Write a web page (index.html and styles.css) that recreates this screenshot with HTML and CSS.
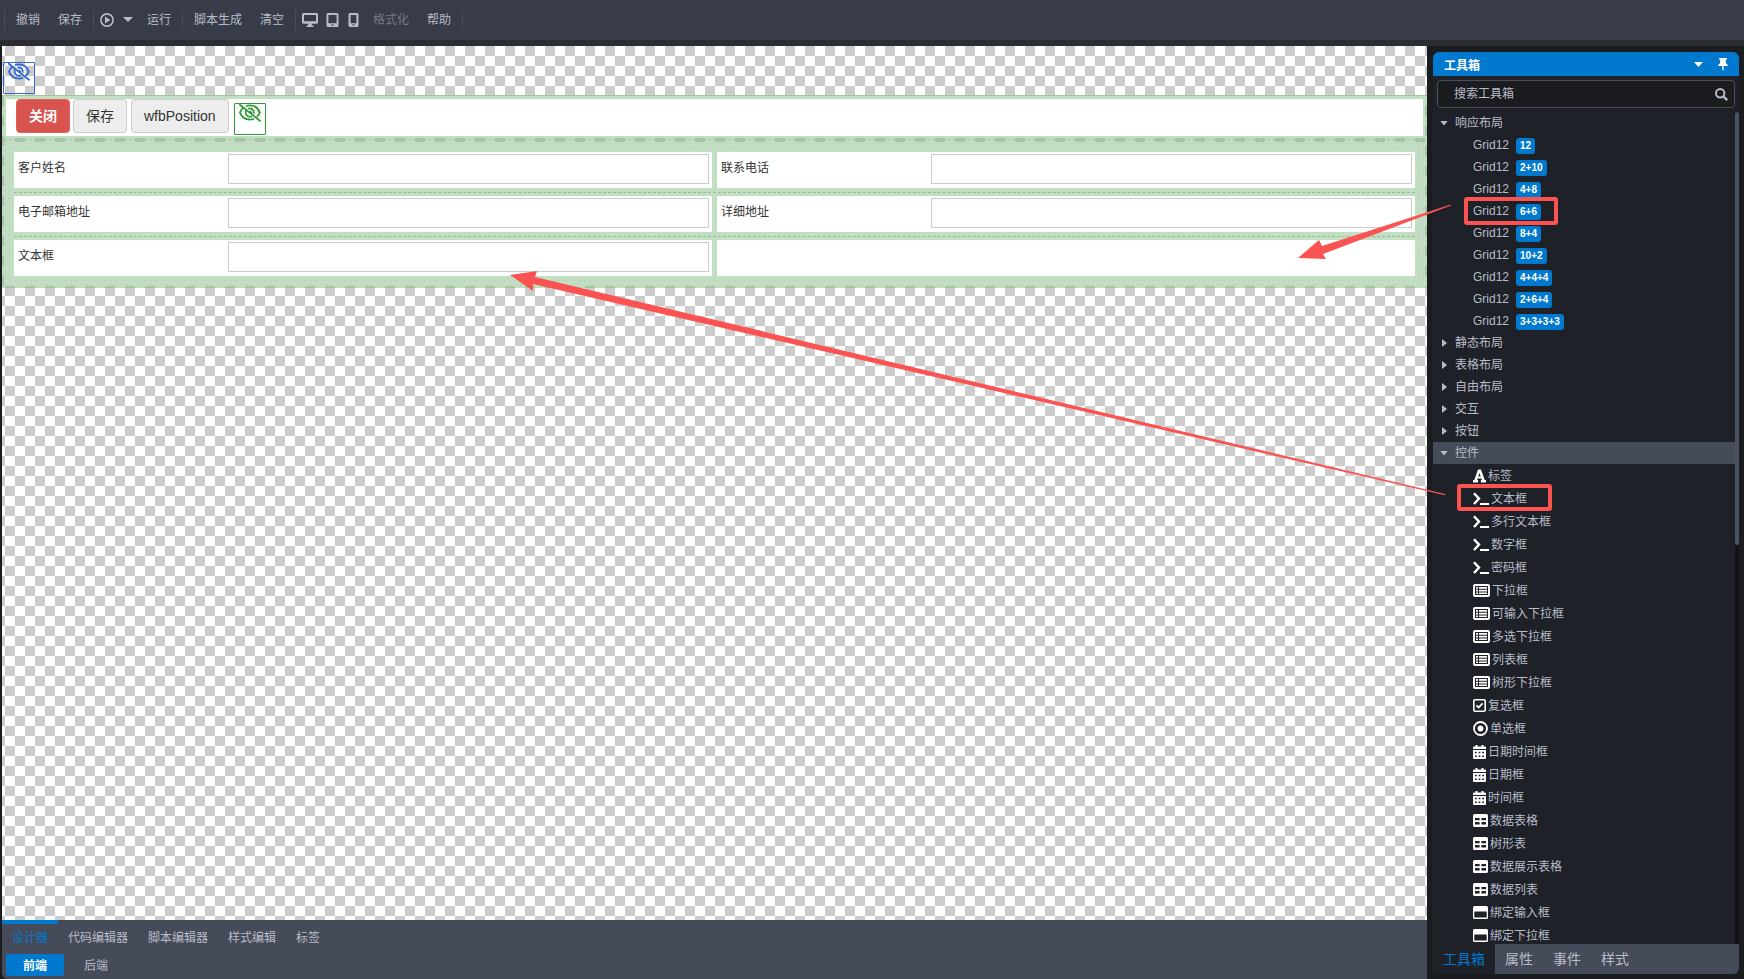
FILE: index.html
```html
<!DOCTYPE html>
<html lang="zh-CN">
<head>
<meta charset="utf-8">
<title>设计器</title>
<link rel="stylesheet" href="styles.css">
</head>
<body>
<svg class="defs" width="0" height="0" aria-hidden="true">
  <symbol id="font" viewBox="0 0 13 14"><path fill-rule="evenodd" d="M5 .5h3l3.700 10.500H13v2.500H7.900V11h1l-.4-1.400h-4L4.100 11h1v2.500H0V11h1.300zM6.500 4 5.300 7.500h2.400z"/></symbol>
  <symbol id="term" viewBox="0 0 16 14"><path d="M1 1.200 6 6.600 1 12" fill="none" stroke="currentColor" stroke-width="2.400"/><path d="M7 11h9v2H7z"/></symbol>
  <symbol id="list" viewBox="0 0 17 13"><path fill-rule="evenodd" d="M2 0h13a2 2 0 0 1 2 2v9a2 2 0 0 1-2 2H2a2 2 0 0 1-2-2V2a2 2 0 0 1 2-2zM2 2v9h13V2zM3 3h2v1.700H3zM6 3h8v1.700H6zM3 5.700h2v1.700H3zM6 5.700h8v1.700H6zM3 8.400h2v1.700H3zM6 8.400h8v1.700H6z"/></symbol>
  <symbol id="check" viewBox="0 0 13 13"><rect x=".8" y=".8" width="11.400" height="11.400" rx="1.200" fill="none" stroke="currentColor" stroke-width="1.600"/><path d="m3.400 6.300 2.200 2.200 4-4.200" fill="none" stroke="currentColor" stroke-width="1.800"/></symbol>
  <symbol id="radio" viewBox="0 0 15 15"><circle cx="7.500" cy="7.500" r="6.500" fill="none" stroke="currentColor" stroke-width="1.800"/><circle cx="7.500" cy="7.500" r="2.900"/></symbol>
  <symbol id="cal" viewBox="0 0 13 14"><path fill-rule="evenodd" d="M2.500 0h2v1.600h4V0h2v1.600H12a1 1 0 0 1 1 1V4H0V2.600a1 1 0 0 1 1-1h1.500zM0 5h13v8a1 1 0 0 1-1 1H1a1 1 0 0 1-1-1zM2 6.800v1.500h1.800V6.800zM5.600 6.800v1.500h1.800V6.800zM9.200 6.800v1.500H11V6.800zM2 10.400v1.500h1.800v-1.500zM5.600 10.400v1.500h1.800v-1.500zM9.200 10.400v1.500H11v-1.500z"/></symbol>
  <symbol id="table" viewBox="0 0 15 13"><path fill-rule="evenodd" d="M1.500 0h12A1.500 1.500 0 0 1 15 1.500v10a1.500 1.500 0 0 1-1.500 1.500h-12A1.500 1.500 0 0 1 0 11.500v-10A1.500 1.500 0 0 1 1.500 0zM2 4v2.200h4.600V4zM8.400 4v2.200H13V4zM2 8v2.500h4.600V8zM8.400 8v2.500H13V8z"/></symbol>
  <symbol id="window" viewBox="0 0 15 13"><path fill-rule="evenodd" d="M1.500 0h12A1.500 1.500 0 0 1 15 1.500v10a1.500 1.500 0 0 1-1.500 1.500h-12A1.500 1.500 0 0 1 0 11.500v-10A1.500 1.500 0 0 1 1.500 0zM1.300 5.500v6h12.400v-6z"/></symbol>
  <symbol id="eye" viewBox="0 0 22 18"><g fill="none" stroke="currentColor" stroke-width="1.800"><path d="M4.500 3.300C2.600 5 1.500 6.800 1 8.600c1.600 4.200 5.400 7 10 7 1.500 0 2.800-.2 4-.7M7 2.200C8.200 1.600 9.500 1.300 11 1.300c4.600 0 8.200 3 9.800 7.300-.6 1.500-1.600 3-2.900 4.200"/><path d="M7.200 6.200c-1.600 3 .2 6.600 3.800 6.600 1 0 1.500-.2 2-.5M9.300 4.700c3.600-1 6.300 1.900 5.400 5.100"/><path d="M10.600 7.600c1.300 0 1.900.8 1.900 1.600"/><path d="m0 0 21.500 17.300"/></g></symbol>
</svg>

<header class="toolbar">
  <div class="group"><button class="tool">撤销</button><button class="tool">保存</button></div>
  <div class="group">
    <button class="tool icon" aria-label="预览"><svg width="14" height="14" viewBox="0 0 14 14"><circle cx="7" cy="7" r="6.100" fill="none" stroke="currentColor" stroke-width="1.600"/><path d="m5 3.600 5.400 3.400L5 10.400z"/></svg></button>
    <button class="tool icon wide" aria-label="更多"><svg width="10" height="5" viewBox="0 0 10 5"><path d="M0 0h10L5 5z"/></svg></button>
    <button class="tool">运行</button>
  </div>
  <div class="group"><button class="tool">脚本生成</button><button class="tool">清空</button></div>
  <div class="group">
    <button class="tool icon" aria-label="桌面"><svg width="16" height="14" viewBox="0 0 16 14"><path fill-rule="evenodd" d="M1.500 0h13A1.500 1.500 0 0 1 16 1.500v7.800a1.500 1.500 0 0 1-1.500 1.500H9.600l.5 1.700h1.400V14h-7v-1.500h1.400l.5-1.700H1.500A1.500 1.500 0 0 1 0 9.300V1.500A1.500 1.500 0 0 1 1.500 0zM2 2v6.200h12V2z"/></svg></button>
    <button class="tool icon" aria-label="平板"><svg width="13" height="14" viewBox="0 0 13 14"><path fill-rule="evenodd" d="M2 0h9a1.500 1.500 0 0 1 1.500 1.500v11A1.500 1.500 0 0 1 11 14H2a1.500 1.500 0 0 1-1.500-1.500v-11A1.500 1.500 0 0 1 2 0zM2.400 1.900v8.400h8.200V1.900zM5.700 11.300v1.500h1.600v-1.500z"/></svg></button>
    <button class="tool icon wide" aria-label="手机"><svg width="11" height="14" viewBox="0 0 11 14"><path fill-rule="evenodd" d="M2 0h7a1.500 1.500 0 0 1 1.500 1.500v11A1.500 1.500 0 0 1 9 14H2a1.500 1.500 0 0 1-1.500-1.500v-11A1.500 1.500 0 0 1 2 0zM2.600 1.900v8.400h5.800V1.900zM4.700 11.300v1.500h1.600v-1.500z"/></svg></button>
    <button class="tool" disabled>格式化</button><button class="tool">帮助</button>
  </div>
</header>

<div class="workspace">
  <main class="editor">
    <div class="canvas">
      <div class="canvas-top"><span class="hidden-item blue"><svg width="22" height="18"><use href="#eye"/></svg></span></div>
      <form class="form">
        <div class="form-bar">
          <div class="form-buttons">
            <button type="button" class="btn danger">关闭</button><button type="button" class="btn">保存</button><button type="button" class="btn">wfbPosition</button><span class="hidden-item green"><svg width="22" height="18"><use href="#eye"/></svg></span>
          </div>
        </div>
        <div class="seam"></div>
        <div class="form-grid"><div class="grid-outer"><div class="grid-inner">
          <div class="row">
            <div class="cell"><label for="f1">客户姓名</label><input id="f1" type="text"></div>
            <div class="cell"><label for="f2">联系电话</label><input id="f2" type="text"></div>
          </div>
          <div class="row">
            <div class="cell"><label for="f3">电子邮箱地址</label><input id="f3" type="text"></div>
            <div class="cell"><label for="f4">详细地址</label><input id="f4" type="text"></div>
          </div>
          <div class="row">
            <div class="cell"><label for="f5">文本框</label><input id="f5" type="text"></div>
            <div class="cell"></div>
          </div>
        </div></div></div>
      </form>
    </div>
    <footer class="editor-foot">
      <nav class="tabs"><button class="tab active">设计器</button><button class="tab">代码编辑器</button><button class="tab">脚本编辑器</button><button class="tab">样式编辑</button><button class="tab">标签</button></nav>
      <nav class="sides"><button class="side active">前端</button><button class="side">后端</button></nav>
    </footer>
  </main>

  <aside class="panel">
    <div class="panel-head"><span>工具箱</span>
      <button class="head-btn" aria-label="菜单"><svg width="9" height="5" viewBox="0 0 9 5"><path d="M0 0h9L4.500 5z"/></svg></button>
      <button class="head-btn" aria-label="固定"><svg width="10" height="13" viewBox="0 0 10 13"><path d="M1.200 0h7.600v1.800H7.700l.4 3.700c1 .5 1.700 1.400 1.900 2.600H5.700v3.200L5 13l-.7-1.700V8.100H0c.2-1.200.9-2.100 1.900-2.600l.4-3.700H1.200z"/></svg></button>
    </div>
    <div class="search"><input type="text" placeholder="搜索工具箱" aria-label="搜索工具箱"><svg width="13" height="13" viewBox="0 0 13 13"><circle cx="5.200" cy="5.200" r="4.200" fill="none" stroke="currentColor" stroke-width="2"/><path d="m8.500 8.500 3.700 3.700" stroke="currentColor" stroke-width="2.400"/></svg></div>
    <div class="tree">
      <ul class="nodes">
        <li class="node open">响应布局</li>
        <li class="node child">Grid12<b class="badge">12</b></li>
        <li class="node child">Grid12<b class="badge">2+10</b></li>
        <li class="node child">Grid12<b class="badge">4+8</b></li>
        <li class="node child">Grid12<b class="badge">6+6</b></li>
        <li class="node child">Grid12<b class="badge">8+4</b></li>
        <li class="node child">Grid12<b class="badge">10+2</b></li>
        <li class="node child">Grid12<b class="badge">4+4+4</b></li>
        <li class="node child">Grid12<b class="badge">2+6+4</b></li>
        <li class="node child">Grid12<b class="badge">3+3+3+3</b></li>
        <li class="node">静态布局</li>
        <li class="node">表格布局</li>
        <li class="node">自由布局</li>
        <li class="node">交互</li>
        <li class="node">按钮</li>
        <li class="node open selected">控件</li>
        <li class="item"><svg width="13" height="14"><use href="#font"/></svg>标签</li>
        <li class="item"><svg width="16" height="14"><use href="#term"/></svg>文本框</li>
        <li class="item"><svg width="16" height="14"><use href="#term"/></svg>多行文本框</li>
        <li class="item"><svg width="16" height="14"><use href="#term"/></svg>数字框</li>
        <li class="item"><svg width="16" height="14"><use href="#term"/></svg>密码框</li>
        <li class="item"><svg width="17" height="13"><use href="#list"/></svg>下拉框</li>
        <li class="item"><svg width="17" height="13"><use href="#list"/></svg>可输入下拉框</li>
        <li class="item"><svg width="17" height="13"><use href="#list"/></svg>多选下拉框</li>
        <li class="item"><svg width="17" height="13"><use href="#list"/></svg>列表框</li>
        <li class="item"><svg width="17" height="13"><use href="#list"/></svg>树形下拉框</li>
        <li class="item"><svg width="13" height="13"><use href="#check"/></svg>复选框</li>
        <li class="item"><svg width="15" height="15"><use href="#radio"/></svg>单选框</li>
        <li class="item"><svg width="13" height="14"><use href="#cal"/></svg>日期时间框</li>
        <li class="item"><svg width="13" height="14"><use href="#cal"/></svg>日期框</li>
        <li class="item"><svg width="13" height="14"><use href="#cal"/></svg>时间框</li>
        <li class="item"><svg width="15" height="13"><use href="#table"/></svg>数据表格</li>
        <li class="item"><svg width="15" height="13"><use href="#table"/></svg>树形表</li>
        <li class="item"><svg width="15" height="13"><use href="#table"/></svg>数据展示表格</li>
        <li class="item"><svg width="15" height="13"><use href="#table"/></svg>数据列表</li>
        <li class="item"><svg width="15" height="13"><use href="#window"/></svg>绑定输入框</li>
        <li class="item"><svg width="15" height="13"><use href="#window"/></svg>绑定下拉框</li>
      </ul>
      <div class="scroll"><div class="thumb"></div></div>
    </div>
    <nav class="panel-tabs"><button class="ptab active">工具箱</button><button class="ptab">属性</button><button class="ptab">事件</button><button class="ptab">样式</button></nav>
  </aside>
</div>

<svg class="marks" width="1744" height="979" aria-hidden="true">
  <path d="M1298 258 1319 240 1322 246 1451 204.500V205.500L1323 254 1326 259z"/>
  <path d="M510 275 537 271 535 277 1445 494V495.200L533 284 533 291z"/>
  <g fill="none" stroke="#fb5352" stroke-width="4"><rect x="1466" y="199" width="90" height="24" rx="1"/><rect x="1459" y="486" width="91" height="23" rx="1"/></g>
</svg>
</body>
</html>
```
FILE: styles.css
```css
* { box-sizing: border-box; }
body {
  margin: 0;
  height: 100vh;
  display: flex;
  flex-direction: column;
  overflow: hidden;
  background: #1b1c20;
  color: #b9bdc8;
  font: 12px/18px "Liberation Sans", "Noto Sans CJK SC", sans-serif;
}
button, input { font: inherit; color: inherit; }
button { border: 0; padding: 0; margin: 0; background: none; white-space: nowrap; }
svg { display: block; fill: currentColor; flex: none; }
.defs { position: absolute; }

.toolbar {
  flex: none;
  display: flex;
  align-items: center;
  height: 46px;
  padding: 0 4px 1px;
  background: #383c48;
  border-bottom: 6px solid #2b2c31;
}
.group { display: flex; align-items: center; height: 20px; padding: 0 2px; border-right: 1px solid #4a4e5b; }
.group:first-child { border-left: 1px solid #4a4e5b; }
.tool { padding: 0 9px; }
.tool.icon { padding: 0 4px; }
.tool.wide { padding: 0 5px; }
.tool:disabled { color: #747884; }

.workspace { flex: 1; min-height: 0; display: flex; }
.editor { flex: 1; min-width: 0; display: flex; flex-direction: column; padding-left: 2px; }
.canvas {
  flex: 1;
  min-height: 0;
  background: #fff conic-gradient(#ccc 25%, #fff 0 50%, #ccc 0 75%, #fff 0) 13px 0 / 20px 20px;
}
.canvas-top { height: 49px; padding: 16px 1px 0; }
.hidden-item { display: flex; justify-content: center; width: 32px; height: 32px; border: 1px solid; border-radius: 1px; }
.blue { color: #3367d1; }
.green { color: #2f9a36; }

.form {
  display: flex;
  flex-direction: column;
  padding: 0 2px 2px;
  border-top: 1px solid #a3c3a3;
  background: rgba(125, 190, 125, .5);
  color: #333;
}
.form-bar { padding: 3px 2px 2px; background: #c1dfc1; }
.form-buttons { display: flex; align-items: flex-start; height: 37px; padding-left: 10px; background: #fff; }
.btn {
  height: 34px;
  margin-right: 4px;
  padding: 0 12px;
  border: 1px solid #ccc;
  border-radius: 4px;
  background: #ededed;
  font-size: 14px;
}
.btn.danger { margin-right: 3px; background: #d9534f; border-color: #e0605c; color: #fff; font-weight: bold; }
.form-buttons .hidden-item { margin: 4px 0 0 1px; }
.seam { height: 3px; margin-top: 1px; border-top: 1px dashed #a9c2a9; }
.form-grid { padding: 1px; background: #c1dfc1; }
.grid-outer { padding: 3px; border: 1px dashed #cacaca; }
.grid-inner { padding: 4px; border: 1px dashed #cacaca; }
.row { display: grid; grid-template-columns: 1fr 1fr; gap: 5px; }
.row + .row { margin-top: 4px; padding-top: 3px; border-top: 1px dashed #9db59d; }
.cell { display: grid; grid-template-columns: 30% 1fr; gap: 3px; height: 36px; padding: 2px 3px 4px 4px; background: #fff; }
.cell label { padding-top: 5px; }
.cell input { width: 100%; min-width: 0; border: 1px solid #ccc; background: #fff; }

.editor-foot { flex: none; height: 59px; background: #464b59; border-radius: 0 0 0 6px; }
.tabs { display: flex; height: 32px; }
.tab { padding: 0 10px 1px; border-top: 4px solid transparent; }
.tab.active { border-color: #0079ce; color: #0079ce; }
.sides { display: flex; gap: 3px; padding: 2px 4px; }
.side { height: 22px; padding: 2px 17px 0; border-radius: 3px; }
.side.active { background: #0079ce; color: #fff; font-weight: bold; }

.panel { flex: none; width: 317px; display: flex; flex-direction: column; padding: 6px 5px 5px 6px; }
.panel-head {
  flex: none;
  display: flex;
  align-items: center;
  height: 24px;
  padding: 0 11px;
  gap: 15px;
  border-radius: 6px 6px 0 0;
  background: #0079ce;
  color: #fff;
  font-weight: bold;
}
.panel-head span { flex: 1; padding-top: 4px; }
.search {
  flex: none;
  display: flex;
  align-items: center;
  height: 36px;
  padding: 4px;
  background: #1e2128;
}
.search input {
  width: 100%;
  height: 28px;
  margin-right: -20px;
  padding: 0 16px;
  border: 1px solid #4a4e5b;
  border-radius: 4px;
  background: #1b1c20;
}
.search input::placeholder { color: #b9bdc8; }
.search svg { margin-right: 7px; }
.tree { flex: 1; min-height: 0; display: flex; background: #1e2128; overflow: hidden; }
.nodes { flex: 1; margin: 0; padding: 0; list-style: none; }
.node { display: flex; align-items: center; height: 22px; padding-left: 7px; }
.node:not(.child)::before {
  content: "";
  width: 5px;
  height: 8px;
  margin: 0 8px 0 2px;
  background: currentColor;
  clip-path: polygon(0 0, 100% 50%, 0 100%);
}
.node.open::before { width: 8px; height: 5px; margin: 0 7px 0 0; clip-path: polygon(0 0, 100% 0, 50% 100%); }
.node.selected { background: #464b59; }
.node.child { padding-left: 40px; }
.badge {
  height: 16px;
  margin: 2px 0 0 7px;
  padding: 0 4px;
  border-radius: 3px;
  background: #0079ce;
  color: #fff;
  font-size: 10px;
  line-height: 16px;
}
.item { display: flex; align-items: center; gap: 2px; height: 23px; padding-left: 40px; }
.item svg { color: #fff; }
.scroll { width: 4px; background: #111215; }
.thumb { height: 52%; border-radius: 2px; background: #4d5261; }
.panel-tabs { flex: none; display: flex; height: 30px; border-radius: 0 0 6px 6px; background: #464b59; overflow: hidden; }
.ptab { padding: 0 10px; font-size: 14px; }
.ptab.active { background: #1e2128; color: #0079ce; }

.marks { position: absolute; left: 0; top: 0; color: #fb5352; pointer-events: none; }
```
